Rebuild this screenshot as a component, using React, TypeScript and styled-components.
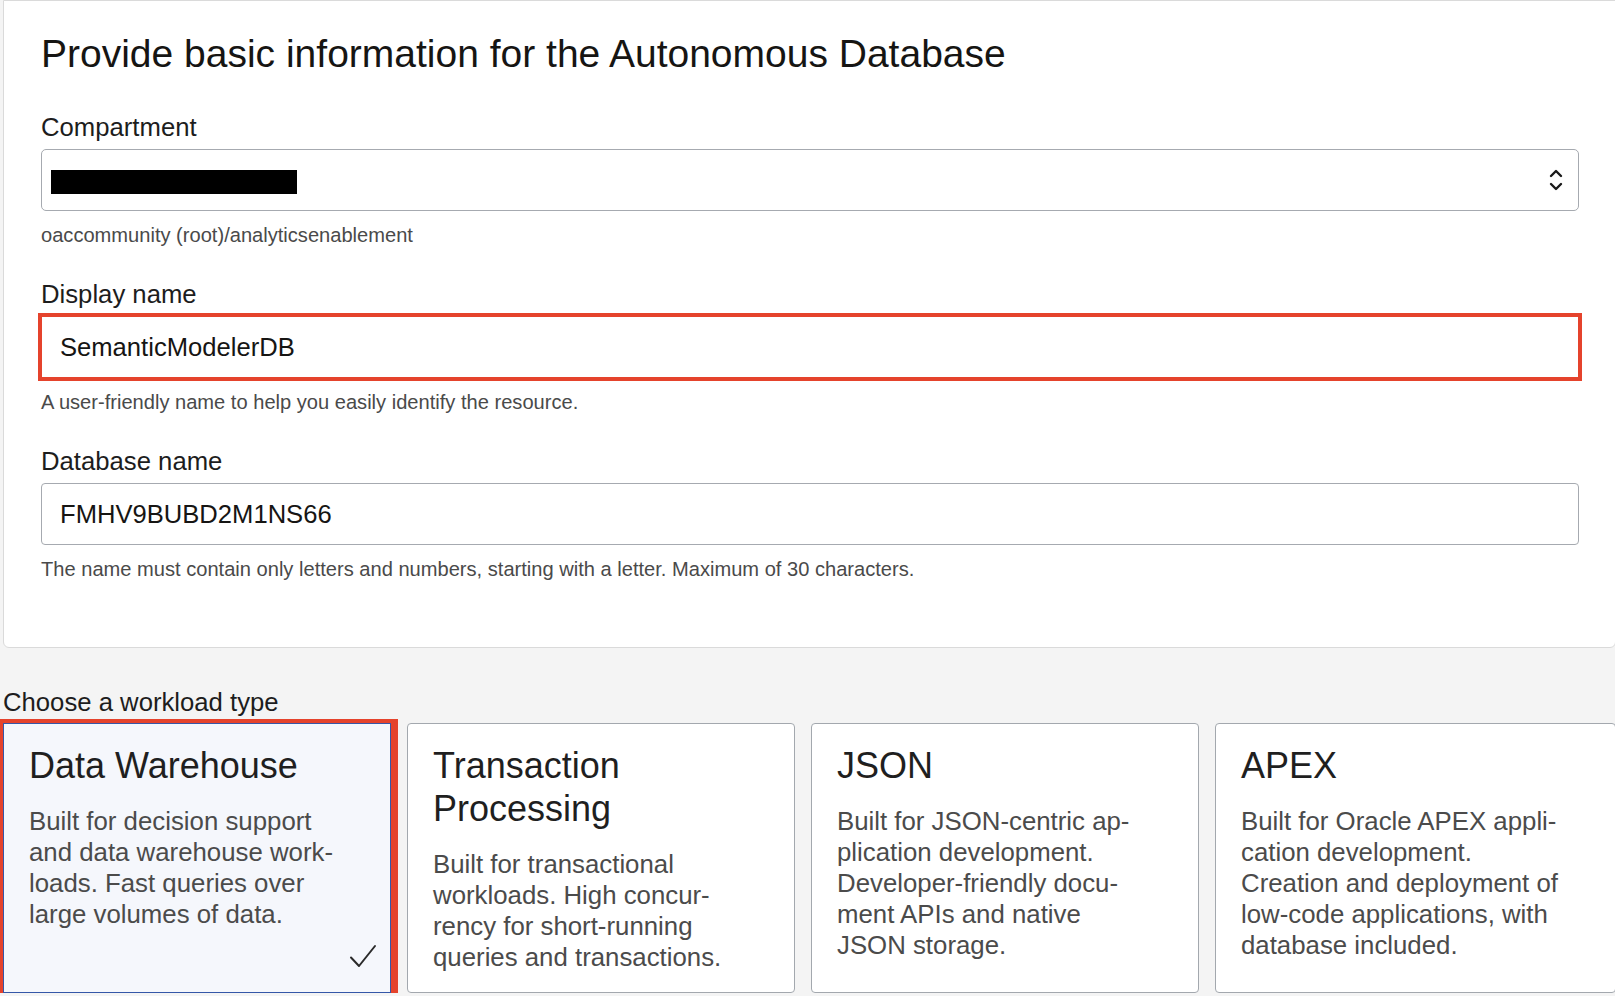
import React from "react";
import styled, { createGlobalStyle } from "styled-components";

const GlobalStyle = createGlobalStyle`
  html, body {
    margin: 0;
    padding: 0;
    background: #f4f4f4;
    overflow: hidden;
  }
  body {
    font-family: "Liberation Sans", Arial, Helvetica, sans-serif;
    color: #161513;
  }
`;

const Page = styled.div`
  width: 1613px;
  padding-left: 3px;
  box-sizing: content-box;
`;

const Panel = styled.section`
  background: #ffffff;
  border: 1px solid #dadada;
  border-radius: 0 0 6px 6px;
  padding: 30px 36px 66px 37px;
`;

const Title = styled.h1`
  margin: 0 0 35px;
  font-size: 39px;
  line-height: 46px;
  font-weight: 400;
  color: #161513;
`;

const Field = styled.div<{ $first?: boolean }>`
  display: flex;
  flex-direction: column;
  margin-top: ${(p) => (p.$first ? "0" : "32px")};
`;

const Label = styled.label`
  font-size: 25.7px;
  line-height: 30px;
  color: #1d1d1d;
  margin-bottom: 7px;
`;

const SelectBox = styled.div`
  height: 62px;
  box-sizing: border-box;
  border: 1px solid #a6aab0;
  border-radius: 5px;
  display: flex;
  align-items: center;
  justify-content: space-between;
  padding: 0 14px 0 9px;
  background: #fff;
`;

const Redaction = styled.div`
  width: 246px;
  height: 24px;
  margin-top: 4px;
  background: #000;
`;

const Input = styled.div<{ $highlight?: boolean }>`
  height: 62px;
  box-sizing: border-box;
  border: 1px solid #a6aab0;
  border-radius: 4px;
  display: flex;
  align-items: center;
  padding: 0 18px;
  font-size: 25.6px;
  color: #161513;
  background: #fff;
  ${(p) =>
    p.$highlight
      ? `outline: 4px solid #e5432c; outline-offset: -1px; border-radius: 0;`
      : ""}
`;

const Help = styled.div`
  margin-top: 12px;
  font-size: 20.1px;
  line-height: 24px;
  color: #4a4a4a;
`;

const SectionLabel = styled.div`
  margin-top: 39px;
  font-size: 25.7px;
  line-height: 30px;
  color: #1d1d1d;
`;

const CardGrid = styled.div`
  margin-top: 6px;
  display: grid;
  grid-template-columns: repeat(3, 388px) 1fr;
  gap: 16px;
`;

const Card = styled.div<{ $selected?: boolean }>`
  position: relative;
  box-sizing: border-box;
  min-height: 269px;
  padding: 20px 25px 19px;
  border-radius: 4px;
  border: 1px solid ${(p) => (p.$selected ? "#3557a8" : "#a3a8ae")};
  background: ${(p) => (p.$selected ? "#f5f7fc" : "#ffffff")};
  ${(p) =>
    p.$selected
      ? "box-shadow: 0 0 0 4px #e5432c, 3px 0 0 4px #e5432c; border-radius: 0;"
      : ""}
`;

const CardTitle = styled.div`
  font-size: 36px;
  line-height: 43px;
  color: #1f1f1f;
`;

const CardText = styled.div`
  margin-top: 19px;
  font-size: 25.8px;
  line-height: 31px;
  color: #4b4b4b;
`;

const Line = styled.span`
  display: block;
  white-space: nowrap;
`;

const Check = styled.svg`
  position: absolute;
  right: 13px;
  bottom: 22px;
`;

const Chevrons = () => (
  <svg width="16" height="26" viewBox="0 0 16 26" fill="none">
    <path d="M3 9 L8 4 L13 9" stroke="#1a1a1a" strokeWidth="2.4" strokeLinecap="round" strokeLinejoin="round" />
    <path d="M3 17 L8 22 L13 17" stroke="#1a1a1a" strokeWidth="2.4" strokeLinecap="round" strokeLinejoin="round" />
  </svg>
);

type Workload = { title: string[]; text: string[]; selected?: boolean };

const workloads: Workload[] = [
  {
    title: ["Data Warehouse"],
    text: ["Built for decision support", "and data warehouse work-", "loads. Fast queries over", "large volumes of data."],
    selected: true,
  },
  {
    title: ["Transaction", "Processing"],
    text: ["Built for transactional", "workloads. High concur-", "rency for short-running", "queries and transactions."],
  },
  {
    title: ["JSON"],
    text: ["Built for JSON-centric ap-", "plication development.", "Developer-friendly docu-", "ment APIs and native", "JSON storage."],
  },
  {
    title: ["APEX"],
    text: ["Built for Oracle APEX appli-", "cation development.", "Creation and deployment of", "low-code applications, with", "database included."],
  },
];

export default function App() {
  return (
    <Page>
      <GlobalStyle />
      <Panel>
        <Title>Provide basic information for the Autonomous Database</Title>
        <Field $first>
          <Label>Compartment</Label>
          <SelectBox>
            <Redaction />
            <Chevrons />
          </SelectBox>
          <Help>oaccommunity (root)/analyticsenablement</Help>
        </Field>
        <Field>
          <Label>Display name</Label>
          <Input $highlight>SemanticModelerDB</Input>
          <Help>A user-friendly name to help you easily identify the resource.</Help>
        </Field>
        <Field>
          <Label>Database name</Label>
          <Input>FMHV9BUBD2M1NS66</Input>
          <Help>The name must contain only letters and numbers, starting with a letter. Maximum of 30 characters.</Help>
        </Field>
      </Panel>
      <SectionLabel>Choose a workload type</SectionLabel>
      <CardGrid>
        {workloads.map((w) => (
          <Card key={w.title.join(" ")} $selected={w.selected}>
            <CardTitle>
              {w.title.map((t) => (
                <Line key={t}>{t}</Line>
              ))}
            </CardTitle>
            <CardText>
              {w.text.map((t) => (
                <Line key={t}>{t}</Line>
              ))}
            </CardText>
            {w.selected && (
              <Check width="28" height="26" viewBox="0 0 28 26" fill="none">
                <path d="M2 13.5 L10 22 L26 2" stroke="#2a2a2a" strokeWidth="2" strokeLinecap="round" strokeLinejoin="round" />
              </Check>
            )}
          </Card>
        ))}
      </CardGrid>
    </Page>
  );
}
